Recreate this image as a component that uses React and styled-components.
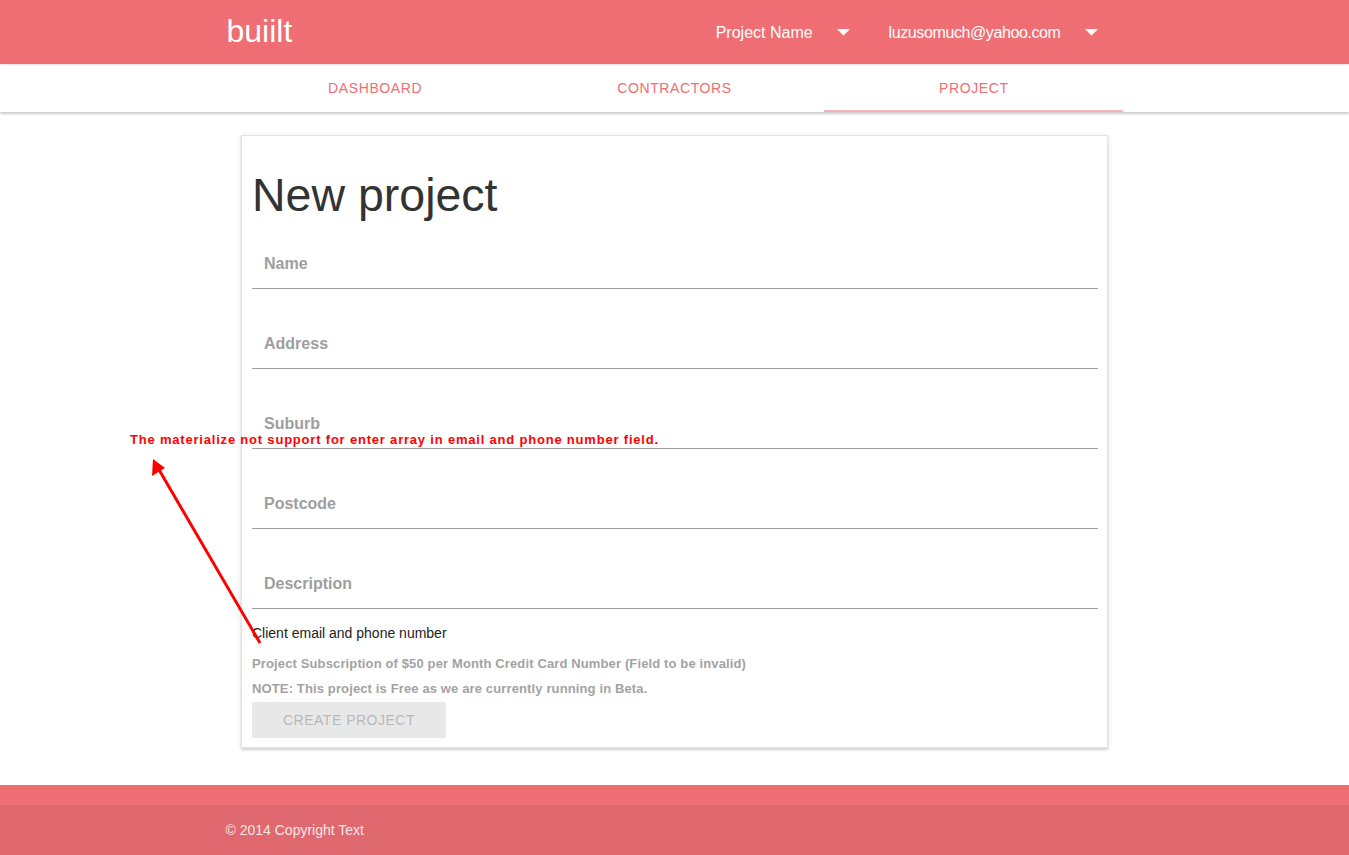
import React from "react";
import styled, { createGlobalStyle } from "styled-components";

const brand = "#ee6e73";

const GlobalStyle = createGlobalStyle`
    html, body {
        margin: 0;
        padding: 0;
        background: #fff;
        font-family: "Liberation Sans", Arial, sans-serif;
    }
    * {
        box-sizing: border-box;
    }
`;

const Page = styled.div`
    position: relative;
    min-height: 100vh;
    display: flex;
    flex-direction: column;
`;

const TopBar = styled.header`
    height: 64px;
    background: ${brand};
    position: relative;
    z-index: 2;
    box-shadow: 0 1px 2px rgba(0, 0, 0, 0.12);
`;

const Wrap = styled.div`
    width: 898px;
    margin: 0 auto;
    height: 100%;
    display: flex;
    align-items: center;
`;

const Logo = styled.a`
    color: #fff;
    font-size: 32px;
    padding-left: 1px;
    text-decoration: none;
    margin-top: -1px;
`;

const RightMenu = styled.div`
    margin-left: auto;
    display: flex;
    align-items: center;
    gap: 39px;
    padding-right: 26px;
`;

const MenuItem = styled.div`
    display: flex;
    align-items: center;
    gap: 24px;
    color: #fff;
    font-size: 16px;
    letter-spacing: ${props => (props.tight ? "-0.4px" : "0")};
    margin-top: 1px;
`;

const Caret = () => (
    <svg width="13" height="7" viewBox="0 0 13 7">
        <polygon points="0,0 13,0 6.5,6.5" fill="#fff"/>
    </svg>
);

const TabsBar = styled.nav`
    height: 48px;
    background: #fff;
    position: relative;
    z-index: 1;
    box-shadow: 0 2px 2px 0 rgba(0, 0, 0, 0.14), 0 1px 4px 0 rgba(0, 0, 0, 0.12);
`;

const Tabs = styled.div`
    width: 898px;
    margin: 0 auto;
    height: 100%;
    display: flex;
`;

const Tab = styled.a`
    flex: 1;
    display: flex;
    align-items: center;
    justify-content: center;
    color: ${brand};
    font-size: 14px;
    letter-spacing: 0.6px;
    text-transform: uppercase;
    border-bottom: 2px solid ${props => (props.active ? "#f6b2b5" : "transparent")};
    padding-top: 2px;
`;

const Main = styled.main`
    flex: 1;
    padding: 23px 0 37px;
`;

const Card = styled.section`
    width: 867px;
    margin: 0 auto;
    background: #fff;
    border: 1px solid #e4e4e4;
    padding: 36px 9px 9px 10px;
    box-shadow: 0 2px 2px 0 rgba(0, 0, 0, 0.1), 0 1px 5px 0 rgba(0, 0, 0, 0.12);
`;

const Title = styled.h1`
    margin: 0;
    font-size: 46.5px;
    line-height: 46px;
    font-weight: 400;
    color: #333;
`;

const Form = styled.form`
    padding-top: 26px;
`;

const Field = styled.div`
    height: 45px;
    border-bottom: 1px solid #9e9e9e;
    & + & {
        margin-top: 35px;
    }
`;

const Label = styled.label`
    display: block;
    padding: 1px 0 5px 12px;
    line-height: 38px;
    font-size: 16px;
    font-weight: bold;
    color: #9e9e9e;
`;

const ClientText = styled.p`
    margin: 14px 0 0;
    font-size: 14px;
    line-height: 20px;
    color: #222;
`;

const Hint = styled.p`
    margin: ${props => props.first ? "8px 0 0" : "0"};
    font-size: 13px;
    line-height: 25px;
    font-weight: bold;
    letter-spacing: 0.13px;
    color: #a3a3a3;
`;

const Button = styled.button`
    margin-top: 1px;
    width: 194px;
    height: 36px;
    border: none;
    border-radius: 2px;
    background: #e8e8e8;
    color: #b9b9b9;
    font-family: inherit;
    font-size: 14px;
    letter-spacing: 0.5px;
    text-transform: uppercase;
`;

const Footer = styled.footer`
    background: ${brand};
    padding-top: 20px;
`;

const Copyright = styled.div`
    height: 50px;
    background: rgba(51, 51, 51, 0.08);
    color: rgba(255, 255, 255, 0.85);
    font-size: 14px;
`;

const Note = styled.div`
    position: absolute;
    left: 130px;
    top: 432px;
    color: #ff0000;
    font-size: 13px;
    font-weight: bold;
    letter-spacing: 0.8px;
    line-height: 16px;
    white-space: nowrap;
    z-index: 5;
`;

const Arrow = styled.svg`
    position: absolute;
    left: 140px;
    top: 450px;
    z-index: 5;
`;

const fields = ["Name", "Address", "Suburb", "Postcode", "Description"];

const App = () => (
    <Page>
        <GlobalStyle/>
        <TopBar>
            <Wrap>
                <Logo>buiilt</Logo>
                <RightMenu>
                    <MenuItem>Project Name <Caret/></MenuItem>
                    <MenuItem tight>luzusomuch@yahoo.com <Caret/></MenuItem>
                </RightMenu>
            </Wrap>
        </TopBar>
        <TabsBar>
            <Tabs>
                <Tab>Dashboard</Tab>
                <Tab>Contractors</Tab>
                <Tab active>Project</Tab>
            </Tabs>
        </TabsBar>
        <Main>
            <Card>
                <Title>New project</Title>
                <Form>
                    {fields.map(f => (
                        <Field key={f}><Label>{f}</Label></Field>
                    ))}
                </Form>
                <ClientText>Client email and phone number</ClientText>
                <Hint first>Project Subscription of $50 per Month Credit Card Number (Field to be invalid)</Hint>
                <Hint>NOTE: This project is Free as we are currently running in Beta.</Hint>
                <Button type="button" disabled>Create project</Button>
            </Card>
        </Main>
        <Footer>
            <Copyright>
                <Wrap>© 2014 Copyright Text</Wrap>
            </Copyright>
        </Footer>
        <Note>The materialize not support for enter array in email and phone number field.</Note>
        <Arrow width="130" height="200" viewBox="0 0 130 200">
            <line x1="120" y1="193" x2="18" y2="18" stroke="#ff0000" strokeWidth="3"/>
            <polygon points="13,9 12,26 25,18" fill="#ff0000"/>
        </Arrow>
    </Page>
);

export default App;
